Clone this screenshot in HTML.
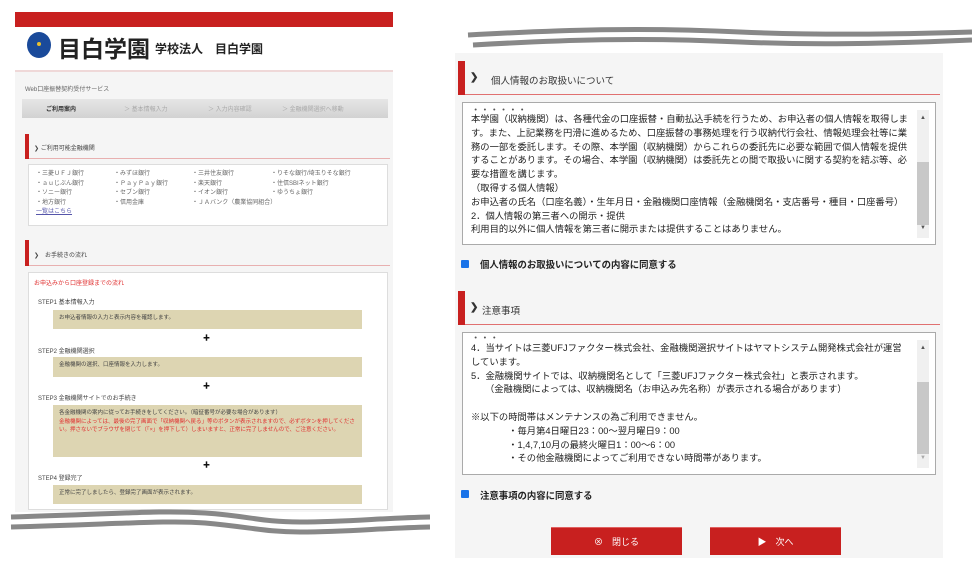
<!DOCTYPE html>
<html><head><meta charset="utf-8"><style>
*{margin:0;padding:0;box-sizing:border-box}
body{width:972px;height:572px;background:#fff;position:relative;overflow:hidden;font-family:"Liberation Sans","Noto Sans CJK JP",sans-serif;color:#333}
.a{position:absolute}
.s{font-size:6px;color:#666;white-space:nowrap}
.ta{position:absolute;background:#fff;border:1px solid #aaa;font-size:9.3px;line-height:13.8px;color:#222;padding:0 22px 0 8px;overflow:hidden}
.sb{position:absolute;right:6px;width:12px;background:#f0f0f0}
.hd{position:absolute;left:458px;width:482px;height:34px;border-bottom:1px solid #e07070;font-size:9.5px}
.hd:before{content:"";position:absolute;left:0;top:0;width:7px;height:34px;background:#c8201f}
.btn{position:absolute;top:527px;height:28px;width:131px;background:#c8201f;color:#fff;font-size:9px;text-align:center;line-height:28px;border-top:1px solid #e06060}
.yb{position:absolute;left:53px;width:309px;background:#ddd5b2;font-size:5.5px;color:#444;padding:4px 6px;line-height:8.5px}
.ar{position:absolute;left:203px;font-size:7px;color:#111}
.st{position:absolute;left:38px;font-size:6px;color:#444}
</style></head><body>
<div class="a" style="left:15px;top:12px;width:378px;height:500px;background:#f5f5f5"></div>
<div class="a" style="left:15px;top:12px;width:378px;height:15px;background:#c8201f"></div>
<div class="a" style="left:15px;top:27px;width:378px;height:45px;background:#fff;border-bottom:2px solid #efd8d8"></div>
<div class="a" style="left:27px;top:32px;width:24px;height:26px;border-radius:50%;background:#1a4a9a"></div>
<div class="a" style="left:37px;top:42px;width:4px;height:4px;border-radius:50%;background:#e8c030"></div>
<div class="a" style="left:58px;top:30px;font-size:23px;font-weight:bold;color:#222;white-space:nowrap">目白学園</div>
<div class="a" style="left:155px;top:40px;font-size:12px;font-weight:bold;color:#222;white-space:nowrap">学校法人　目白学園</div>
<div class="a s" style="left:25px;top:84px">Web口座振替契約受付サービス</div>
<div class="a" style="left:22px;top:99px;width:366px;height:19px;background:linear-gradient(#e6e6e6,#d2d2d2)"></div>
<div class="a s" style="left:46px;top:104px;color:#333;font-weight:bold">ご利用案内</div>
<div class="a s" style="left:124px;top:104px;color:#aaa">＞ 基本情報入力</div>
<div class="a s" style="left:208px;top:104px;color:#aaa">＞ 入力内容確認</div>
<div class="a s" style="left:282px;top:104px;color:#aaa">＞ 金融機関選択へ移動</div>
<div class="a" style="left:25px;top:134px;width:365px;height:25px;border-bottom:1px solid #e8b0b0"></div>
<div class="a" style="left:25px;top:134px;width:4px;height:25px;background:#c8201f"></div>
<div class="a s" style="left:34px;top:143px;color:#444">❯ ご利用可能金融機関</div>
<div class="a" style="left:28px;top:164px;width:360px;height:62px;background:#fff;border:1px solid #ddd"></div>
<div class="a s" style="left:36px;top:170px;line-height:9.6px">・三菱ＵＦＪ銀行<br>・ａｕじぶん銀行<br>・ソニー銀行<br>・地方銀行<br><span style="color:#55a;text-decoration:underline">一覧はこちら</span></div>
<div class="a s" style="left:114px;top:170px;line-height:9.6px">・みずほ銀行<br>・ＰａｙＰａｙ銀行<br>・セブン銀行<br>・信用金庫</div>
<div class="a s" style="left:192px;top:170px;line-height:9.6px">・三井住友銀行<br>・楽天銀行<br>・イオン銀行<br>・ＪＡバンク（農業協同組合）</div>
<div class="a s" style="left:271px;top:170px;line-height:9.6px">・りそな銀行/埼玉りそな銀行<br>・住信SBIネット銀行<br>・ゆうちょ銀行</div>
<div class="a" style="left:25px;top:240px;width:365px;height:26px;border-bottom:1px solid #e8b0b0"></div>
<div class="a" style="left:25px;top:240px;width:4px;height:26px;background:#c8201f"></div>
<div class="a s" style="left:34px;top:250px;color:#444">❯　お手続きの流れ</div>
<div class="a" style="left:28px;top:272px;width:360px;height:238px;background:#fff;border:1px solid #ddd"></div>
<div class="a s" style="left:34px;top:278px;color:#e03030">お申込みから口座登録までの流れ</div>
<div class="st" style="top:297px">STEP1 基本情報入力</div>
<div class="yb" style="top:310px;height:19px">お申込者情報の入力と表示内容を確認します。</div>
<div class="ar" style="top:333px">✚</div>
<div class="st" style="top:346px">STEP2 金融機関選択</div>
<div class="yb" style="top:357px;height:20px">金融機関の選択、口座情報を入力します。</div>
<div class="ar" style="top:381px">✚</div>
<div class="st" style="top:393px">STEP3 金融機関サイトでのお手続き</div>
<div class="yb" style="top:405px;height:52px">各金融機関の案内に従ってお手続きをしてください。（暗証番号が必要な場合があります）<br><span style="color:#e03030">金融機関によっては、最後の完了画面で「収納機関へ戻る」等のボタンが表示されますので、必ずボタンを押してください。押さないでブラウザを閉じて（「×」を押下して）しまいますと、正常に完了しませんので、ご注意ください。</span></div>
<div class="ar" style="top:460px">✚</div>
<div class="st" style="top:473px">STEP4 登録完了</div>
<div class="yb" style="top:485px;height:19px">正常に完了しましたら、登録完了画面が表示されます。</div>
<svg class="a" style="left:0;top:500px" width="430" height="40"><path d="M11 17 C120 14 160 10 205 13 C250 16 260 22 300 22 C350 22 380 18 430 17" stroke="#888" stroke-width="5" fill="none"/><path d="M11 27 C120 24 170 20 205 23 C250 27 265 32 300 32 C350 32 380 28 430 27" stroke="#888" stroke-width="5" fill="none"/></svg>
<svg class="a" style="left:460px;top:20px" width="512" height="35"><path d="M8 15 C100 10 180 7 280 12 C350 15 420 15 512 12" stroke="#888" stroke-width="5" fill="none"/><path d="M13 25 C100 20 180 17 280 22 C350 25 420 24 512 20" stroke="#888" stroke-width="5" fill="none"/></svg>
<div class="a" style="left:455px;top:53px;width:488px;height:505px;background:#f5f5f5"></div>
<div class="hd" style="top:61px"><span class="a" style="left:12px;top:11px;font-weight:bold;font-size:10px">❯</span><span class="a" style="left:33px;top:12px">個人情報のお取扱いについて</span></div>
<div class="ta" style="left:462px;top:102px;width:474px;height:143px;padding-top:5px"><div style="height:5px;overflow:hidden;line-height:4px;color:#555">・・・・・・</div>本学園（収納機関）は、各種代金の口座振替・自動払込手続を行うため、お申込者の個人情報を取得します。また、上記業務を円滑に進めるため、口座振替の事務処理を行う収納代行会社、情報処理会社等に業務の一部を委託します。その際、本学園（収納機関）からこれらの委託先に必要な範囲で個人情報を提供することがあります。その場合、本学園（収納機関）は委託先との間で取扱いに関する契約を結ぶ等、必要な措置を講じます。<br>（取得する個人情報）<br>お申込者の氏名（口座名義）・生年月日・金融機関口座情報（金融機関名・支店番号・種目・口座番号）<br>2．個人情報の第三者への開示・提供<br>利用目的以外に個人情報を第三者に開示または提供することはありません。
<div class="sb" style="top:7px;height:128px"><div style="position:absolute;top:52px;height:63px;width:12px;background:#c8c8c8"></div><div style="position:absolute;top:2px;left:3px;font-size:6px;color:#555">▲</div><div style="position:absolute;bottom:2px;left:3px;font-size:6px;color:#555">▼</div></div></div>
<div class="a" style="left:461px;top:260px;width:8px;height:8px;background:#1a73e8;border-radius:1px"></div>
<div class="a" style="left:480px;top:257px;font-size:9.4px;font-weight:bold;color:#222">個人情報のお取扱いについての内容に同意する</div>
<div class="hd" style="top:291px"><span class="a" style="left:12px;top:11px;font-weight:bold;font-size:10px">❯</span><span class="a" style="left:24px;top:12px">注意事項</span></div>
<div class="ta" style="left:462px;top:332px;width:474px;height:143px;padding-top:3px;padding-right:28px"><div style="height:6px;overflow:hidden;line-height:4px;color:#555">・・・</div>4．当サイトは三菱UFJファクター株式会社、金融機関選択サイトはヤマトシステム開発株式会社が運営しています。<br>5．金融機関サイトでは、収納機関名として「三菱UFJファクター株式会社」と表示されます。<br>　　（金融機関によっては、収納機関名（お申込み先名称）が表示される場合があります）<br><br>※以下の時間帯はメンテナンスの為ご利用できません。<br>　　　　・毎月第4日曜日23：00～翌月曜日9：00<br>　　　　・1,4,7,10月の最終火曜日1：00～6：00<br>　　　　・その他金融機関によってご利用できない時間帯があります。
<div class="sb" style="top:7px;height:128px"><div style="position:absolute;top:42px;height:72px;width:12px;background:#c8c8c8"></div><div style="position:absolute;top:2px;left:3px;font-size:6px;color:#555">▲</div><div style="position:absolute;bottom:2px;left:3px;font-size:6px;color:#aaa">▼</div></div></div>
<div class="a" style="left:461px;top:490px;width:8px;height:8px;background:#1a73e8;border-radius:1px"></div>
<div class="a" style="left:480px;top:488px;font-size:9.4px;font-weight:bold;color:#222">注意事項の内容に同意する</div>
<div class="btn" style="left:551px">⊗　閉じる</div>
<div class="btn" style="left:710px">▶　次へ</div>
</body></html>
